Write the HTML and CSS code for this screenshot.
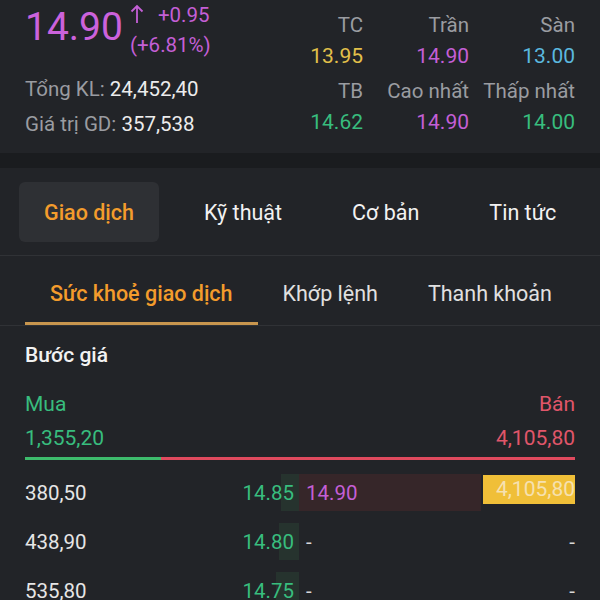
FILE: index.html
```html
<!DOCTYPE html>
<html lang="vi">
<head>
<meta charset="utf-8">
<link rel="stylesheet" href="styles.css">
</head>
<body>
<div class="app">
  <header class="summary">
    <div class="left">
      <div class="price-row">
        <div class="price">14.90</div>
        <div class="change">
          <div class="change-line"><svg class="arrow" width="14" height="20" viewBox="0 0 14 20"><path d="M7 19V2M1.5 7.5L7 2l5.5 5.5" fill="none" stroke="#c45fd6" stroke-width="1.8"/></svg>+0.95</div>
          <div class="change-line">(+6.81%)</div>
        </div>
      </div>
      <div class="stat"><span class="lbl">Tổng KL:</span> <span class="val">24,452,40</span></div>
      <div class="stat"><span class="lbl">Giá trị GD:</span> <span class="val">357,538</span></div>
    </div>
    <div class="refs">
      <div class="ref"><div class="lbl">TC</div><div class="num yellow">13.95</div></div>
      <div class="ref"><div class="lbl">Trần</div><div class="num purple">14.90</div></div>
      <div class="ref"><div class="lbl">Sàn</div><div class="num blue">13.00</div></div>
      <div class="ref gap"><div class="lbl">TB</div><div class="num green">14.62</div></div>
      <div class="ref gap"><div class="lbl">Cao nhất</div><div class="num purple">14.90</div></div>
      <div class="ref gap"><div class="lbl">Thấp nhất</div><div class="num green">14.00</div></div>
    </div>
  </header>
  <div class="band"></div>
  <nav class="tabs">
    <div class="tab active">Giao dịch</div>
    <div class="tab">Kỹ thuật</div>
    <div class="tab">Cơ bản</div>
    <div class="tab">Tin tức</div>
  </nav>
  <nav class="subtabs">
    <div class="subtab active">Sức khoẻ giao dịch</div>
    <div class="subtab">Khớp lệnh</div>
    <div class="subtab">Thanh khoản</div>
  </nav>
  <section class="book">
    <h2 class="title">Bước giá</h2>
    <div class="sides">
      <span class="green">Mua</span>
      <span class="red">Bán</span>
    </div>
    <div class="sides totals">
      <span class="green">1,355,20</span>
      <span class="red">4,105,80</span>
    </div>
    <div class="ratio">
      <div class="ratio-buy" style="width:24.8%"></div>
      <div class="ratio-sell"></div>
    </div>
    <div class="rows">
      <div class="row">
        <div class="bid">
          <div class="bid-bar" style="width:18px"></div>
          <span class="vol">380,50</span>
          <span class="bp">14.85</span>
        </div>
        <div class="ask">
          <div class="ask-bar" style="width:182px"></div>
          <span class="ap">14.90</span>
          <span class="avol flash">4,105,80</span>
        </div>
      </div>
      <div class="row">
        <div class="bid">
          <div class="bid-bar" style="width:20px"></div>
          <span class="vol">438,90</span>
          <span class="bp">14.80</span>
        </div>
        <div class="ask">
          <span class="ap dash">-</span>
          <span class="avol dash">-</span>
        </div>
      </div>
      <div class="row">
        <div class="bid">
          <div class="bid-bar" style="width:23px"></div>
          <span class="vol">535,80</span>
          <span class="bp">14.75</span>
        </div>
        <div class="ask">
          <span class="ap dash">-</span>
          <span class="avol dash">-</span>
        </div>
      </div>
    </div>
  </section>
</div>
</body>
</html>
```

FILE: styles.css
```css
* { box-sizing: border-box; }
html, body {
  margin: 0;
  padding: 0;
  background: #222428;
}
body {
  font-family: Roboto, "Noto Sans", "Liberation Sans", sans-serif;
  color: #e6e6e6;
  width: 600px;
  height: 600px;
  overflow: hidden;
}
.app { width: 600px; }

.summary {
  height: 153px;
  padding: 0 25px;
  display: flex;
  justify-content: space-between;
}
.price-row {
  display: flex;
  height: 60px;
}
.price {
  font-size: 39px;
  line-height: 54px;
  color: #cc62dc;
}
.change {
  margin-left: 7px;
  color: #c45fd6;
  font-size: 20.5px;
}
.change-line { line-height: 30px; white-space: nowrap; }
.arrow {
  vertical-align: -2px;
  margin-right: 14px;
}
.stat {
  font-size: 20.5px;
  line-height: 35px;
  white-space: nowrap;
}
.price-row + .stat { margin-top: 12px; }
.lbl { color: #9a9ca1; }
.val { color: #ececec; }

.refs {
  padding-top: 10px;
  display: grid;
  grid-template-columns: repeat(3, 106px);
  align-content: start;
}
.ref {
  text-align: right;
  font-size: 20.5px;
  line-height: 31px;
  white-space: nowrap;
}
.ref.gap { margin-top: 4px; }
.num { font-size: 21px; }
.yellow { color: #e3c04a; }
.purple { color: #c45fd6; }
.blue { color: #5bb8df; }
.green { color: #38bd7e; }
.red { color: #e0566a; }

.band {
  height: 15px;
  background: #1a1c1f;
}

.tabs {
  display: flex;
  gap: 20px;
  padding: 14px 0 13px 19px;
  border-bottom: 1px solid #303236;
}
.tab {
  flex-shrink: 0;
  white-space: nowrap;
  height: 60px;
  padding: 0 25px;
  display: flex;
  align-items: center;
  font-size: 21.5px;
  color: #f2f2f2;
  border-radius: 6px;
}
.tab.active {
  background: #2e3034;
  color: #f39c2c;
  font-weight: 500;
}

.subtabs {
  display: flex;
  padding-left: 25px;
  border-bottom: 1px solid #303236;
}
.subtab {
  flex-shrink: 0;
  white-space: nowrap;
  padding: 24px 25px 14px;
  font-size: 21.5px;
  line-height: 28px;
  color: #e0e0e0;
  border-bottom: 3px solid transparent;
}
.subtab.active {
  color: #f39c2c;
  font-weight: 500;
  border-bottom-color: #c8964e;
}

.book { padding: 0 25px; }
.title {
  margin: 0;
  padding-top: 16px;
  font-size: 21px;
  font-weight: 500;
  line-height: 26px;
  color: #f2f2f2;
}
.sides {
  display: flex;
  justify-content: space-between;
  font-size: 21px;
  line-height: 34px;
}
.title + .sides { margin-top: 19px; }
.ratio {
  display: flex;
  height: 3px;
  margin-top: 2px;
}
.ratio-buy { background: #3dbb6c; }
.ratio-sell { flex: 1; background: #e04a5e; }

.rows {
  margin-top: 14px;
  display: flex;
  flex-direction: column;
  gap: 12px;
}
.row {
  display: flex;
  height: 37px;
  font-size: 20.5px;
}
.bid, .ask {
  position: relative;
  flex: 1;
  display: flex;
  align-items: center;
  justify-content: space-between;
}
.bid { padding-right: 5px; }
.ask { padding-left: 7px; }
.bid-bar {
  position: absolute;
  right: 0;
  top: 0;
  bottom: 0;
  background: #26332e;
}
.ask-bar {
  position: absolute;
  left: 0;
  top: 0;
  bottom: 0;
  background: #362629;
}
.vol, .bp, .ap, .avol { position: relative; }
.vol { color: #e6e6e6; }
.bp { color: #38bd7e; }
.ap { color: #c45fd6; }
.avol { color: #e6e6e6; }
.dash { color: #d8d8d8; }
.avol.flash {
  align-self: flex-start;
  margin-top: 1px;
  width: 92px;
  height: 29px;
  line-height: 29px;
  text-align: right;
  background: #f0bf38;
  color: #f6e1b0;
  font-size: 21px;
}
```
